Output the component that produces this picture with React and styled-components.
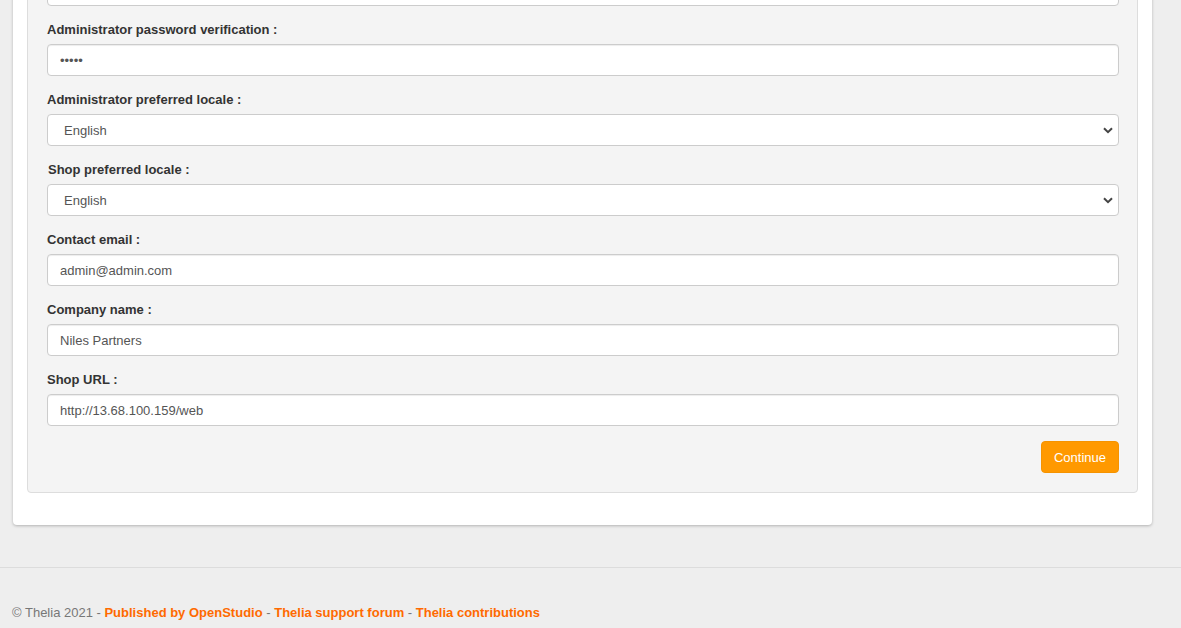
import React from "react";
import styled, { createGlobalStyle } from "styled-components";

const GlobalStyle = createGlobalStyle`
  html, body {
    margin: 0;
    padding: 0;
    background: #eeeeee;
    font-family: "Liberation Sans", Arial, sans-serif;
    font-size: 13px;
    color: #333;
    overflow: hidden;
  }
`;

const fields = [
  { label: "Administrator password :", type: "password", value: "admin" },
  { label: "Administrator password verification :", type: "password", value: "admin" },
  { label: "Administrator preferred locale :", select: true, value: "English" },
  { label: "Shop preferred locale :", select: true, value: "English", nudge: true },
  { label: "Contact email :", value: "admin@admin.com" },
  { label: "Company name :", value: "Niles Partners" },
  { label: "Shop URL :", value: "http://13.68.100.159/web" },
];

const App = () => {
  return (
    <>
      <GlobalStyle />
      <Page>
        <Card>
          <Panel>
            {fields.map((f) => (
              <Group key={f.label}>
                <Label $nudge={f.nudge}>{f.label}</Label>
                {f.select ? (
                  <SelectWrap>
                    <Select defaultValue={f.value}>
                      <option>English</option>
                      <option>Français</option>
                    </Select>
                    <Chevron viewBox="0 0 10 7">
                      <path d="M1 1.2 L5 5.2 L9 1.2" fill="none" stroke="#444" strokeWidth="2" />
                    </Chevron>
                  </SelectWrap>
                ) : (
                  <Input type={f.type || "text"} defaultValue={f.value} readOnly />
                )}
              </Group>
            ))}
            <Actions>
              <Button>Continue</Button>
            </Actions>
          </Panel>
        </Card>
        <Footer>
          <span>© Thelia 2021 - </span>
          <FooterLink>Published by OpenStudio</FooterLink>
          <span> - </span>
          <FooterLink>Thelia support forum</FooterLink>
          <span> - </span>
          <FooterLink>Thelia contributions</FooterLink>
        </Footer>
      </Page>
    </>
  );
};

const Page = styled.div`
  margin-top: -86px;
`;

const Card = styled.div`
  margin-left: 13px;
  width: 1139px;
  box-sizing: border-box;
  background: #fff;
  border-radius: 4px;
  box-shadow: 0 1px 3px rgba(0, 0, 0, 0.25);
  padding: 14px 14px 32px;
`;

const Panel = styled.div`
  background: #f4f4f4;
  border: 1px solid #dddddd;
  border-radius: 4px;
  padding: 20px 18px 19px 19px;
`;

const Group = styled.div`
  margin-bottom: 13px;
`;

const Label = styled.label`
  display: block;
  font-weight: bold;
  font-size: 13px;
  line-height: 20px;
  padding-top: 1px;
  margin-bottom: 4px;
  color: #333;
  padding-left: ${(p) => (p.$nudge ? "1px" : "0")};
`;

const Input = styled.input`
  display: block;
  width: 100%;
  height: 32px;
  box-sizing: border-box;
  padding: 6px 12px;
  font-family: "Liberation Sans", Arial, sans-serif;
  font-size: 13px;
  color: #555;
  background: #fff;
  border: 1px solid #cccccc;
  border-radius: 4px;
  box-shadow: inset 0 1px 1px rgba(0, 0, 0, 0.075);
  outline: none;
`;

const SelectWrap = styled.div`
  position: relative;
`;

const Select = styled.select`
  display: block;
  width: 100%;
  height: 32px;
  box-sizing: border-box;
  padding: 6px 16px;
  font-family: "Liberation Sans", Arial, sans-serif;
  font-size: 13px;
  color: #555;
  background: #fff;
  border: 1px solid #cccccc;
  border-radius: 4px;
  appearance: none;
  -webkit-appearance: none;
  outline: none;
`;

const Chevron = styled.svg`
  position: absolute;
  right: 6px;
  top: 13px;
  width: 10px;
  height: 7px;
  pointer-events: none;
`;

const Actions = styled.div`
  display: flex;
  justify-content: flex-end;
  margin-top: 15px;
`;

const Button = styled.button`
  height: 32px;
  padding: 0 12px;
  background: #ff9900;
  border: 1px solid #f59300;
  border-radius: 4px;
  color: #fff;
  font-family: "Liberation Sans", Arial, sans-serif;
  font-size: 13px;
  cursor: pointer;
`;

const Footer = styled.footer`
  margin-top: 42px;
  border-top: 1px solid #dcdcdc;
  padding: 37px 12px 0;
  font-size: 13px;
  line-height: 16px;
  color: #777;
`;

const FooterLink = styled.a`
  color: #ff6a00;
  font-weight: bold;
  text-decoration: none;
`;

export default App;
